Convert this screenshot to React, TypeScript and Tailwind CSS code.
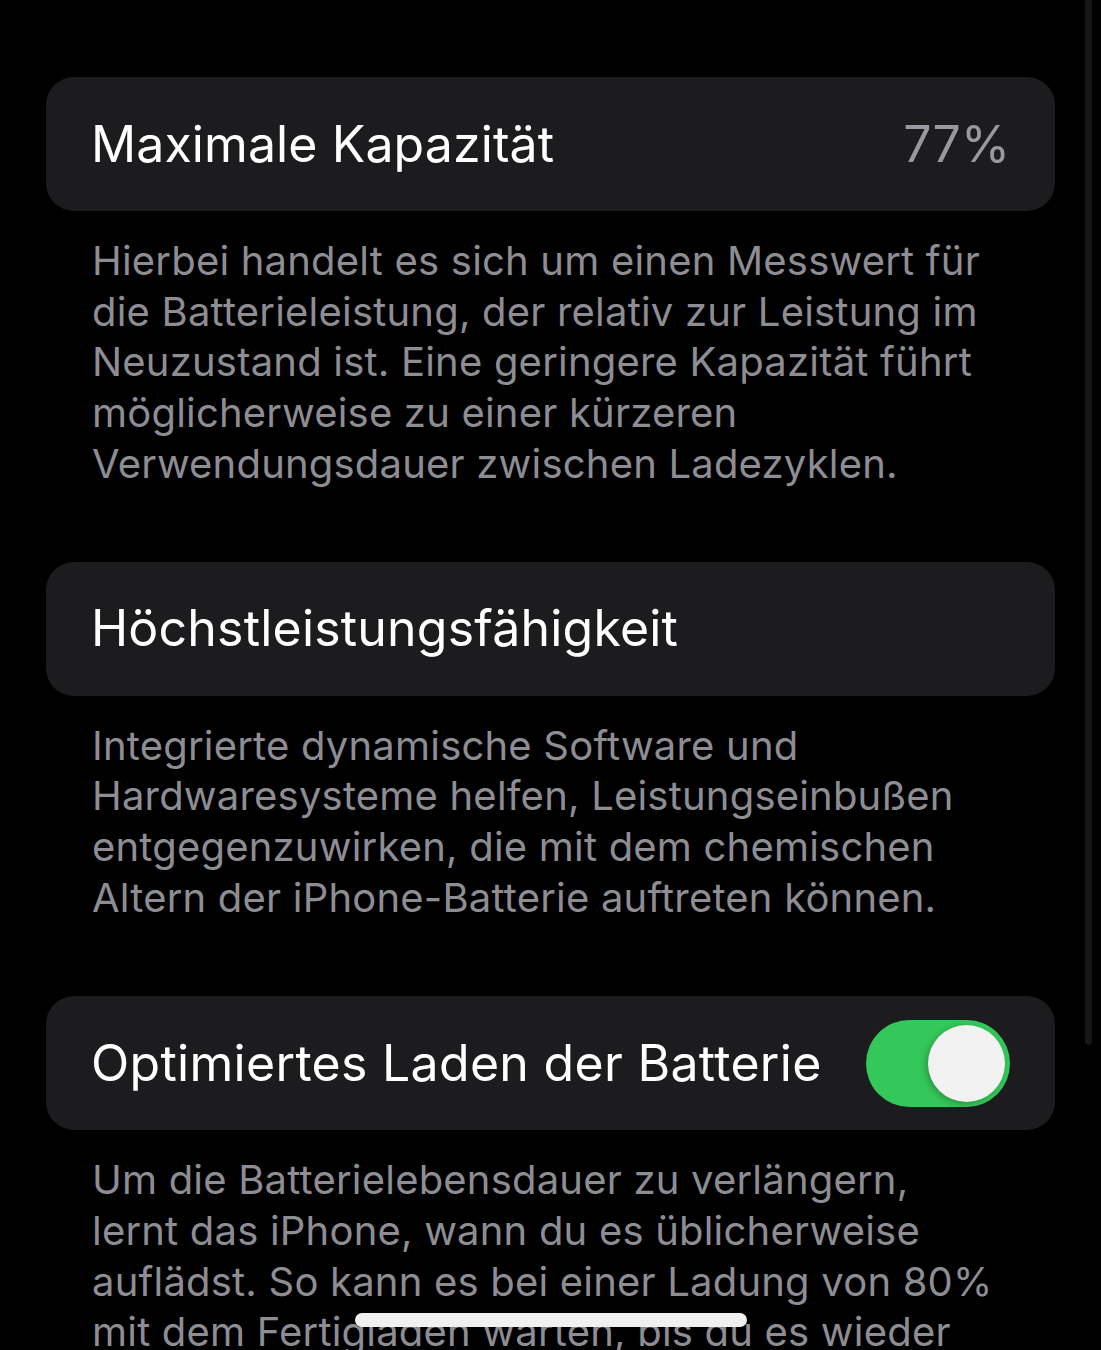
import React from "react";

const font = { fontFamily: 'Inter, "Noto Sans", "Liberation Sans", sans-serif' };

function Footer({ lines }: { lines: string[] }) {
  return (
    <div className="pl-[92px] pr-[46px] pt-[25px] text-[40px] leading-[50.7px] text-[#8d8d93] tracking-[0.2px]">
      {lines.map((l, i) => (
        <div key={i} className="whitespace-nowrap">{l}</div>
      ))}
    </div>
  );
}

function Card({ children }: { children: React.ReactNode }) {
  return (
    <div className="mx-[46px] h-[134px] rounded-[28px] bg-[#1c1c1e] pl-[45px] pr-[45px] flex items-center justify-between">
      {children}
    </div>
  );
}

export default function App() {
  return (
    <div className="relative w-[1101px] h-[1350px] overflow-hidden bg-black" style={font}>
      <div className="pt-[77px]">
        <Card>
          <span className="text-[50px] text-white tracking-[0.1px]">Maximale Kapazität</span>
          <span className="text-[50px] text-[#98989e]">77%</span>
        </Card>
        <Footer
          lines={[
            "Hierbei handelt es sich um einen Messwert für",
            "die Batterieleistung, der relativ zur Leistung im",
            "Neuzustand ist. Eine geringere Kapazität führt",
            "möglicherweise zu einer kürzeren",
            "Verwendungsdauer zwischen Ladezyklen.",
          ]}
        />
        <div className="h-[72px]" />
        <Card>
          <span className="text-[50px] text-white tracking-[0.2px]">Höchstleistungsfähigkeit</span>
        </Card>
        <Footer
          lines={[
            "Integrierte dynamische Software und",
            "Hardwaresysteme helfen, Leistungseinbußen",
            "entgegenzuwirken, die mit dem chemischen",
            "Altern der iPhone-Batterie auftreten können.",
          ]}
        />
        <div className="h-[73px]" />
        <Card>
          <span className="text-[50px] text-white tracking-[0.3px]">Optimiertes Laden der Batterie</span>
          <div className="w-[144px] h-[87px] rounded-full bg-[#34c759] flex items-center justify-end pr-[5px]">
            <div className="w-[77px] h-[77px] rounded-full bg-[#f2f2f2] shadow-[-2px_2px_6px_rgba(0,0,0,0.25)]" />
          </div>
        </Card>
        <Footer
          lines={[
            "Um die Batterielebensdauer zu verlängern,",
            "lernt das iPhone, wann du es üblicherweise",
            "auflädst. So kann es bei einer Ladung von 80%",
            "mit dem Fertigladen warten, bis du es wieder",
          ]}
        />
      </div>
      <div className="absolute left-[1085px] top-0 w-[7px] h-[1045px] rounded-b-full bg-[#161616]" />
      <div className="absolute left-[355px] top-[1313px] w-[392px] h-[14px] rounded-full bg-[#f0f0f0]" />
    </div>
  );
}
